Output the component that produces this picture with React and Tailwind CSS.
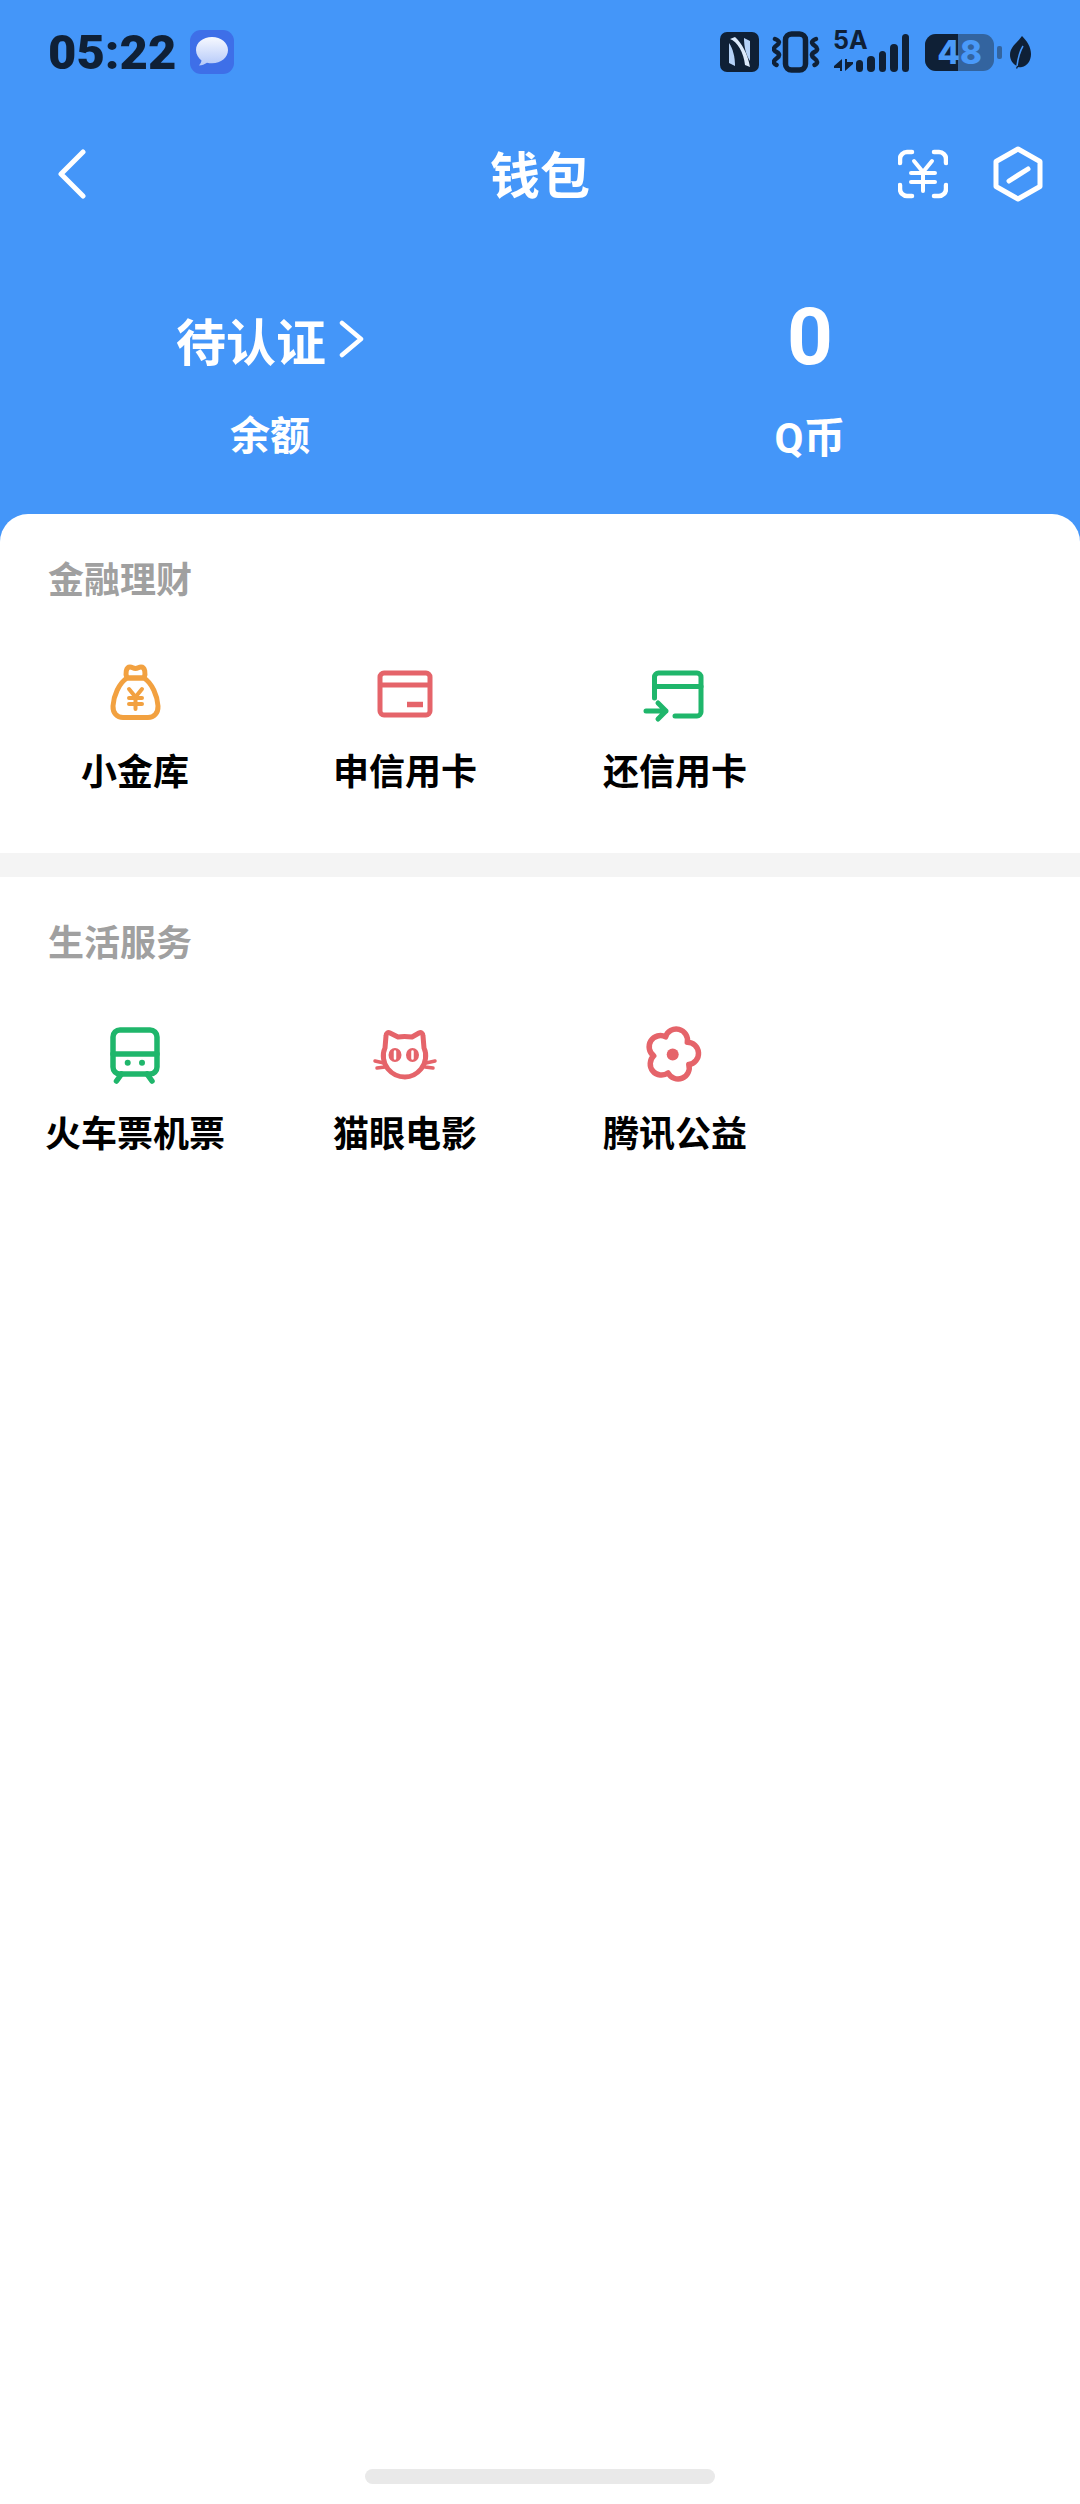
const DARK = "#0f2036";

function NotifyIcon() {
  return (
    <div className="w-[44px] h-[44px] rounded-[11px] bg-[#3e6fe8] flex items-center justify-center ml-[14px]">
      <svg width="36" height="36" viewBox="0 0 36 36">
        <defs>
          <linearGradient id="bubble" x1="0" y1="0" x2="0" y2="1">
            <stop offset="0" stopColor="#f7f9ff" />
            <stop offset="1" stopColor="#b4c9f9" />
          </linearGradient>
        </defs>
        <path d="M18 3C9 3 2 8.500 2 16c0 4.500 2.500 8 5.500 10.500-.3 2-1.300 3.500-2.500 5 3-.2 5.500-1.300 8-2.800 1.600.4 3.300.6 5 .6 9 0 16-6 16-13.300S27 3 18 3z" fill="url(#bubble)" />
      </svg>
    </div>
  );
}

function NfcIcon() {
  return (
    <svg width="39" height="40" viewBox="0 0 39 40">
      <rect width="39" height="40" rx="7" fill={DARK} />
      <path d="M9 11C13 17 15 25 15 34L9 31z" fill="#b5d2f8" />
      <path d="M30 29C26 23 24 15 24 6L30 9z" fill="#b5d2f8" />
      <path d="M10 7C17 9 24 21 25 33L30 35C28 22 21 10 15 5z" fill="#dbe9fb" />
    </svg>
  );
}

function VibrateIcon() {
  return (
    <svg width="48" height="42" viewBox="0 0 48 42" fill="none" stroke={DARK}>
      <rect x="13.500" y="3" width="20" height="36" rx="6" strokeWidth="5.500" />
      <path d="M3 8c5 2 5 4 1.500 6.500S1 19 4.500 21s3.500 4 0 6.500S1 32 4.500 34" strokeWidth="4.500" strokeLinecap="round" />
      <path d="M44 8c-5 2-5 4-1.500 6.500S46 19 42.500 21s-3.500 4 0 6.500S46 32 42.500 34" strokeWidth="4.500" strokeLinecap="round" />
    </svg>
  );
}

function SignalIcon() {
  const bars = [12, 16, 21, 28, 38];
  return (
    <div className="relative w-[76px] h-[40px]">
      <span className="absolute left-0 top-[-6px] text-[25px] leading-[28px] font-bold text-[#0f2036] font-['Inter',sans-serif]">5A</span>
      <svg className="absolute left-[1px] top-[27px]" width="19" height="12" viewBox="0 0 19 12" fill={DARK}>
        <path d="M0 7l8-7v12H6V9H0z" />
        <path d="M19 5l-8 7V0h2v3h6z" />
      </svg>
      <div className="absolute right-0 bottom-0 flex items-end gap-[4px]">
        {bars.map((h, i) => (
          <div key={i} className="w-[7.500px] rounded-full bg-[#0f2036]" style={{ height: h }} />
        ))}
      </div>
    </div>
  );
}

function Battery() {
  return (
    <div className="flex items-center">
      <div className="relative w-[69px] h-[37px] rounded-[11px] bg-[#33649f] flex">
        <div className="w-[33px] rounded-l-[11px] bg-[#0f2036]" />
        <span className="absolute inset-0 flex items-center justify-center text-[#4a9af9] text-[33px] font-extrabold leading-none font-['Inter',sans-serif]">48</span>
      </div>
      <div className="w-[5px] h-[13px] rounded-[2px] bg-[#33649f] ml-[3px]" />
      <svg className="ml-[8px]" width="21" height="33" viewBox="0 0 21 33">
        <path d="M12 0C17 5 21 11 21 18c0 7-4 12-9 13-2 .4-3 .4-4 0l-1 2-1-1 1-2C3 28 0 24 0 19 0 11 7 7 12 0z" fill={DARK} />
        <path d="M7 30C8 22 10 15 13 10" stroke="#4496f9" strokeWidth="1.500" fill="none" />
      </svg>
    </div>
  );
}

function StatusBar() {
  return (
    <div className="h-[104px] pl-[48px] pr-[49px] flex items-center">
      <span className="text-[49px] leading-none font-black text-[#0f2036] font-['Roboto',sans-serif]">05:22</span>
      <NotifyIcon />
      <div className="ml-auto flex items-center gap-[13px]">
        <NfcIcon />
        <VibrateIcon />
        <SignalIcon />
        <div className="ml-[3px]"><Battery /></div>
      </div>
    </div>
  );
}

function NavBar() {
  return (
    <div className="h-[140px] grid grid-cols-3 items-center px-[37px]">
      <svg className="ml-[21px]" width="28" height="50" viewBox="0 0 28 50" fill="none" stroke="#fff" strokeWidth="5" strokeLinecap="round" strokeLinejoin="round">
        <path d="M25 3L3 25l22 22" />
      </svg>
      <div className="pb-[4px] text-center text-white text-[50px] leading-none font-bold">钱包</div>
      <div className="flex items-center justify-end gap-[45px]">
        <svg width="50" height="50" viewBox="0 0 50 50" fill="none" stroke="#fff" strokeWidth="4.500" strokeLinecap="round">
          <path d="M14 3H9a7 7 0 0 0-7 7v4M36 3h5a7 7 0 0 1 7 7v4M14 47H9a7 7 0 0 1-7-7v-4M36 47h5a7 7 0 0 0 7-7v-4" />
          <path d="M16 12l9 11 9-11M13 24h24M13 33h24M25 23v19" strokeWidth="4" />
        </svg>
        <svg width="50" height="56" viewBox="0 0 50 56" fill="none" stroke="#fff" strokeWidth="5" strokeLinejoin="round" strokeLinecap="round">
          <path d="M25 3l22 12.500v25L25 53 3 40.500v-25z" />
          <path d="M16 35l19-12" />
        </svg>
      </div>
    </div>
  );
}

function MoneyBag() {
  return (
    <svg width="72" height="72" viewBox="0 0 72 72" fill="none" stroke="#f2a140" strokeWidth="5" strokeLinecap="round" strokeLinejoin="round">
      <path d="M28 22C20 27 14.500 40 14 50c-.3 7 4 11.500 10 11.500h25c6 0 10.300-4.500 10-11.500-.5-10-6-23-14-28z" />
      <path d="M28 22c-2-4-1-11 3-11 2.500 0 3 1.500 5.500 1.500S39.500 11 42 11c4 0 5 7 3 11z" />
      <path d="M30 33l6.500 8L43 33M30 42h13M30 48h13M36.500 41v12" strokeWidth="4" />
    </svg>
  );
}

function ApplyCard() {
  return (
    <svg width="72" height="72" viewBox="0 0 72 72" fill="none" stroke="#e5646a" strokeWidth="5">
      <rect x="11" y="17" width="50" height="42" rx="4" />
      <path d="M11 29h50" />
      <path d="M38 48.500h16" strokeWidth="5.500" />
    </svg>
  );
}

function RepayCard() {
  return (
    <svg width="72" height="72" viewBox="0 0 72 72" fill="none" stroke="#1fb66b" strokeWidth="5" strokeLinecap="round" strokeLinejoin="round">
      <path d="M15.500 42V21a4 4 0 0 1 4-4H58a4 4 0 0 1 4 4v35a4 4 0 0 1-4 4H36" />
      <path d="M15.500 30.500H62" />
      <path d="M7 55h20M19 47l8 8-8 8" />
    </svg>
  );
}

function Train() {
  return (
    <svg width="72" height="72" viewBox="0 0 72 72" fill="none" stroke="#1fb66b" strokeWidth="5.500" strokeLinecap="round">
      <rect x="14" y="12" width="44" height="44" rx="7" />
      <path d="M14 36h44M22.500 56l-5 7M48 56l5 7" />
      <circle cx="28.700" cy="44.800" r="3" fill="#1fb66b" stroke="none" />
      <circle cx="43" cy="44.800" r="3" fill="#1fb66b" stroke="none" />
    </svg>
  );
}

function Cat() {
  return (
    <svg width="72" height="72" viewBox="0 0 72 72" fill="none" stroke="#e5646a" strokeWidth="5" strokeLinecap="round" strokeLinejoin="round">
      <path d="M17 18c0-3 2-4 4-3l8 4q6-1 14 0l7-4c2-1 4 0 4 3l1 12c3 6 2 15-3 21-5 6-11 8-16 8-6 0-12-2-17-8-5-6-6-15-3-21z" />
      <ellipse cx="26" cy="37" rx="6.500" ry="7" fill="#e5646a" stroke="none" />
      <ellipse cx="43.500" cy="37" rx="6.500" ry="7" fill="#e5646a" stroke="none" />
      <path d="M26 33.500v7M43.500 33.500v7" stroke="#fff" strokeWidth="2.500" />
      <path d="M6 43l9 2M8 50l8-1M66 43l-9 2M64 50l-8-1" strokeWidth="3.500" />
    </svg>
  );
}

function Flower() {
  return (
    <svg width="72" height="72" viewBox="0 0 72 72" fill="none" stroke="#e5646a" strokeWidth="5.500" strokeLinejoin="round">
      <path d="M26.600 18.900A11.200 11.200 0 0 1 48.300 24.300A11.200 11.200 0 0 1 49.800 46.600A11.200 11.200 0 0 1 29.100 54.900A11.200 11.200 0 0 1 14.700 37.800A11.200 11.200 0 0 1 26.600 18.900Z" />
      <circle cx="33.700" cy="36.500" r="6" fill="#e5646a" stroke="none" />
    </svg>
  );
}

function Tile({ icon, label }) {
  return (
    <div className="flex flex-col items-center">
      {icon}
      <div className="mt-[16px] h-[50px] leading-[50px] text-[36px] font-bold text-black whitespace-nowrap">{label}</div>
    </div>
  );
}

function SectionTitle({ children }) {
  return <div className="h-[50px] leading-[50px] pl-[48px] text-[36px] font-bold text-[#a0a0a0]">{children}</div>;
}

export default function App() {
  return (
    <div className="h-[2504px] w-[1080px] bg-[#4496f9] flex flex-col font-['Noto_Sans_CJK_SC',sans-serif]">
      <StatusBar />
      <NavBar />

      {/* balance */}
      <div className="h-[270px] pt-[58px] grid grid-cols-2">
        <div className="flex flex-col items-center text-white">
          <div className="h-[74px] flex items-center">
            <span className="text-[50px] leading-none font-bold">待认证</span>
            <svg className="ml-[13px]" width="25" height="38" viewBox="0 0 25 38" fill="none" stroke="#fff" strokeWidth="4.500" strokeLinecap="round" strokeLinejoin="round">
              <path d="M3 3l19 16L3 35" />
            </svg>
          </div>
          <div className="mt-[32px] h-[50px] leading-[50px] text-[40px] font-bold">余额</div>
        </div>
        <div className="flex flex-col items-center text-white">
          <div className="h-[80px] flex items-center">
            <span className="text-[80px] leading-none font-bold font-['Roboto',sans-serif] mt-[-10px]">0</span>
          </div>
          <div className="mt-[32px] h-[50px] leading-[50px] text-[42px] font-bold font-['Roboto','Noto_Sans_CJK_SC',sans-serif]">Q币</div>
        </div>
      </div>

      {/* card */}
      <div className="flex-1 bg-white rounded-t-[28px] flex flex-col">
        <div className="pt-[38px] h-[339px]">
          <SectionTitle>金融理财</SectionTitle>
          <div className="mt-[54px] grid grid-cols-4">
            <Tile icon={<MoneyBag />} label="小金库" />
            <Tile icon={<ApplyCard />} label="申信用卡" />
            <Tile icon={<RepayCard />} label="还信用卡" />
          </div>
        </div>
        <div className="h-[24px] bg-[#f4f4f4]" />
        <div className="pt-[38px]">
          <SectionTitle>生活服务</SectionTitle>
          <div className="mt-[53px] grid grid-cols-4">
            <Tile icon={<Train />} label="火车票机票" />
            <Tile icon={<Cat />} label="猫眼电影" />
            <Tile icon={<Flower />} label="腾讯公益" />
          </div>
        </div>
        <div className="mt-auto mb-[20px] mx-auto w-[350px] h-[15px] rounded-full bg-[#e9e9e9]" />
      </div>
    </div>
  );
}
